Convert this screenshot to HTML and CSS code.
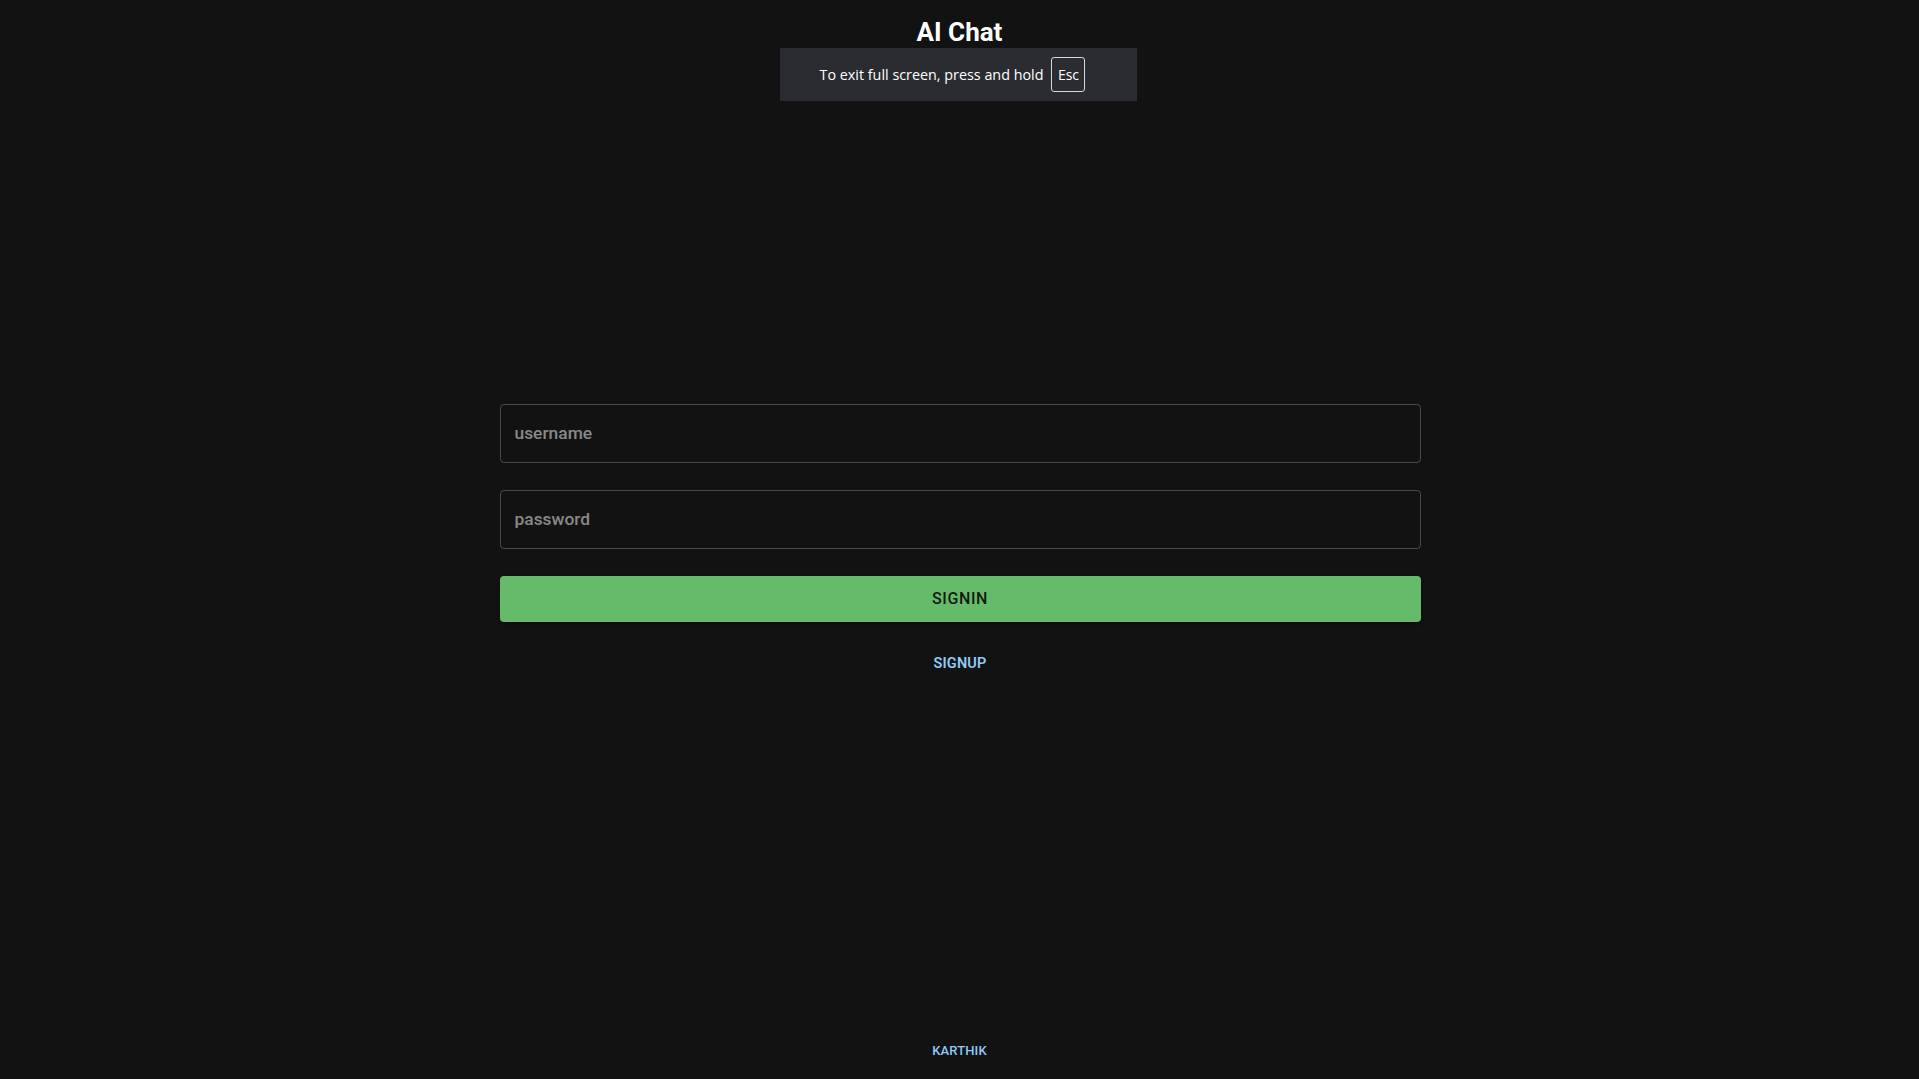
FILE: index.html
```html
<!DOCTYPE html>
<html lang="en">
<head>
<meta charset="utf-8">
<title>AI Chat</title>
<link rel="stylesheet" href="styles.css">
</head>
<body>
<div class="page">
  <header class="header">
    <h1 class="title">AI Chat</h1>
  </header>
  <main class="main">
    <form class="form">
      <input class="field" type="text" placeholder="username">
      <input class="field" type="password" placeholder="password">
      <button class="signin" type="button">SIGNIN</button>
      <button class="signup" type="button">SIGNUP</button>
    </form>
  </main>
  <footer class="footer">
    <span class="author">KARTHIK</span>
  </footer>
</div>
<div class="fs-bubble">
  <span>To exit full screen, press and hold</span>
  <span class="key">Esc</span>
</div>
</body>
</html>
```

FILE: styles.css
```css
* { box-sizing: border-box; }
html, body {
  margin: 0;
  padding: 0;
  background: #121212;
  color: #fff;
  font-family: Roboto, "Liberation Sans", sans-serif;
}
.page {
  min-height: 100vh;
  display: flex;
  flex-direction: column;
}
.header {
  padding-top: 15px;
  text-align: center;
}
.title {
  margin: 0;
  font-size: 26px;
  line-height: 1.334;
  font-weight: 700;
}
.main {
  flex: 1;
  display: flex;
  align-items: center;
  justify-content: center;
  padding-bottom: 5px;
  padding-left: 1px;
}
.form {
  width: 921px;
  display: flex;
  flex-direction: column;
  gap: 27px;
}
.field {
  height: 59px;
  width: 100%;
  background: transparent;
  border: 1px solid rgba(255,255,255,0.23);
  border-radius: 4px;
  padding: 0 14px;
  color: #fff;
  font-family: Roboto, "Liberation Sans", sans-serif;
  font-size: 17.4px;
  font-weight: 500;
  outline: none;
}
.field::placeholder {
  color: rgba(255,255,255,0.5);
  opacity: 1;
}
.signin {
  height: 46px;
  border: 0;
  border-radius: 4px;
  background: #66bb6a;
  color: rgba(0,0,0,0.87);
  font-family: Roboto, "Liberation Sans", sans-serif;
  font-size: 16px;
  font-weight: 500;
  letter-spacing: 0.04em;
  box-shadow: 0 3px 1px -2px rgba(0,0,0,0.2), 0 2px 2px 0 rgba(0,0,0,0.14), 0 1px 5px 0 rgba(0,0,0,0.12);
}
.signup {
  align-self: center;
  margin-top: -2px;
  border: 0;
  background: transparent;
  color: #90caf9;
  padding: 4px 5px;
  font-family: Roboto, "Liberation Sans", sans-serif;
  font-size: 14.5px;
  line-height: 1.75;
  font-weight: 600;
  letter-spacing: 0.01em;
}
.footer {
  text-align: center;
  padding-bottom: 19px;
}
.author {
  color: #90caf9;
  font-size: 13px;
  line-height: 1.5;
  font-weight: 500;
  letter-spacing: 0.01em;
}
.fs-bubble {
  position: absolute;
  top: 48px;
  left: 780px;
  width: 357px;
  height: 53px;
  background: #2a2c31;
  display: flex;
  align-items: center;
  justify-content: center;
  gap: 8px;
  padding-right: 12px;
  color: #fff;
  font-family: "Open Sans", "Noto Sans", sans-serif;
  font-size: 14.35px;
}
.key {
  display: inline-flex;
  align-items: center;
  justify-content: center;
  width: 34px;
  height: 35px;
  border: 1.5px solid #d8d8d8;
  border-radius: 3px;
  font-size: 14px;
}
```
